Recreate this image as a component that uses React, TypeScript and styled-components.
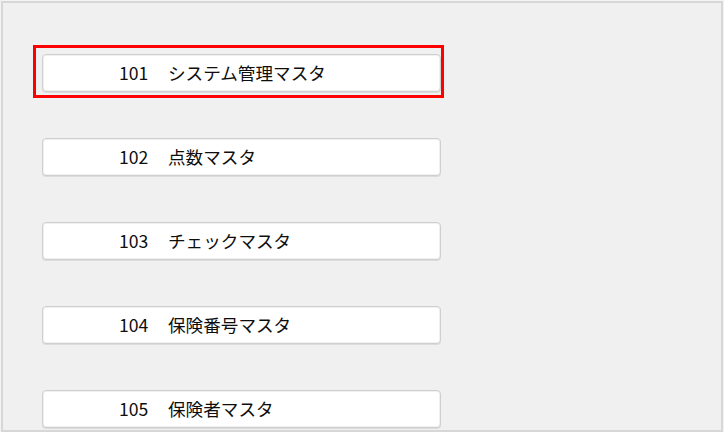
import React from "react";
import styled, { createGlobalStyle } from "styled-components";

const masters = [
  { code: "101", name: "システム管理マスタ" },
  { code: "102", name: "点数マスタ" },
  { code: "103", name: "チェックマスタ" },
  { code: "104", name: "保険番号マスタ" },
  { code: "105", name: "保険者マスタ" },
];

const App: React.FC = () => {
  return (
    <>
      <GlobalStyle />
      <Frame>
        <MenuList>
          {masters.map((m, i) => (
            <MenuButton key={m.code} $selected={i === 0}>
              <Code>{m.code}</Code>
              <Name>{m.name}</Name>
            </MenuButton>
          ))}
        </MenuList>
      </Frame>
    </>
  );
};

export default App;

const GlobalStyle = createGlobalStyle`
  body {
    margin: 0;
    background: #f3f3f3;
    font-family: "Noto Sans CJK JP", "Noto Sans", sans-serif;
  }
`;

const Frame = styled.div`
  width: 722px;
  height: 431px;
  margin: 1px 0 0 1px;
  box-sizing: border-box;
  border: 2px solid #d7d7d7;
  background: #f0f0f0;
  overflow: hidden;
`;

const MenuList = styled.div`
  display: flex;
  flex-direction: column;
  gap: 46px;
  padding: 51px 0 0 39px;
`;

const MenuButton = styled.button<{ $selected?: boolean }>`
  position: relative;
  display: flex;
  align-items: center;
  width: 399px;
  height: 38px;
  padding: 0 0 1px 76px;
  box-sizing: border-box;
  border: 1px solid #cfcfcf;
  border-radius: 4px;
  background: #ffffff;
  box-shadow: inset 0 0 0 1px #f0f0f0, 0 1px 0 #dcdcdc;
  font-family: "Noto Sans CJK JP", "Noto Sans", sans-serif;
  font-size: 17.6px;
  font-weight: 400;
  color: #0e0e0e;
  cursor: pointer;

  &::after {
    content: "";
    display: ${({ $selected }) => ($selected ? "block" : "none")};
    position: absolute;
    left: -10px;
    top: -10px;
    right: -4px;
    bottom: -7px;
    border: 3px solid #ff0000;
    pointer-events: none;
  }
`;

const Code = styled.span`
  display: inline-block;
  width: 49px;
  text-align: left;
`;

const Name = styled.span`
  white-space: nowrap;
`;
